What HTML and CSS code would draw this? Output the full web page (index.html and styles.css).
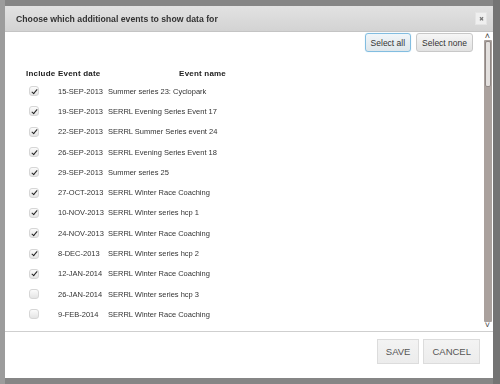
FILE: index.html
```html
<!DOCTYPE html>
<html>
<head>
    <title>Choose events</title>
    <link rel="stylesheet" href="styles.css">
</head>
<body>
    <div class="backdrop">
        <div class="dialog">
            <div class="dialog-header">
                <span class="dialog-title">Choose which additional events to show data for</span>
                <span class="close-btn">&#x2716;</span>
            </div>

            <div class="dialog-body">
                <div class="scroll-area">
                    <div class="select-buttons">
                        <button class="btn-small focused">Select all</button>
                        <button class="btn-small">Select none</button>
                    </div>

                    <table class="events">
                        <thead>
                            <tr>
                                <th class="col-include">Include</th>
                                <th class="col-date">Event date</th>
                                <th class="col-name">Event name</th>
                            </tr>
                        </thead>
                        <tbody>
                            <tr><td><span class="check on"></span></td><td>15-SEP-2013</td><td>Summer series 23: Cyclopark</td></tr>
                            <tr><td><span class="check on"></span></td><td>19-SEP-2013</td><td>SERRL Evening Series Event 17</td></tr>
                            <tr><td><span class="check on"></span></td><td>22-SEP-2013</td><td>SERRL Summer Series event 24</td></tr>
                            <tr><td><span class="check on"></span></td><td>26-SEP-2013</td><td>SERRL Evening Series Event 18</td></tr>
                            <tr><td><span class="check on"></span></td><td>29-SEP-2013</td><td>Summer series 25</td></tr>
                            <tr><td><span class="check on"></span></td><td>27-OCT-2013</td><td>SERRL Winter Race Coaching</td></tr>
                            <tr><td><span class="check on"></span></td><td>10-NOV-2013</td><td>SERRL Winter series hcp 1</td></tr>
                            <tr><td><span class="check on"></span></td><td>24-NOV-2013</td><td>SERRL Winter Race Coaching</td></tr>
                            <tr><td><span class="check on"></span></td><td>8-DEC-2013</td><td>SERRL Winter series hcp 2</td></tr>
                            <tr><td><span class="check on"></span></td><td>12-JAN-2014</td><td>SERRL Winter Race Coaching</td></tr>
                            <tr><td><span class="check"></span></td><td>26-JAN-2014</td><td>SERRL Winter series hcp 3</td></tr>
                            <tr><td><span class="check"></span></td><td>9-FEB-2014</td><td>SERRL Winter Race Coaching</td></tr>
                        </tbody>
                    </table>
                </div>

                <div class="scrollbar">
                    <span class="arrow">&#x2c4;</span>
                    <div class="track">
                        <div class="thumb"></div>
                    </div>
                    <span class="arrow">&#x2c5;</span>
                </div>
            </div>

            <div class="dialog-footer">
                <button class="btn-footer">SAVE</button>
                <button class="btn-footer">CANCEL</button>
            </div>
        </div>
    </div>
</body>
</html>
```

FILE: styles.css
```css
body {
    margin: 0;
    font-family: "Liberation Sans", Arial, sans-serif;
    background: #8a8a8a;
    -webkit-font-smoothing: antialiased;
}
.backdrop {
    width: 500px;
    height: 384px;
    padding: 6px 7px 6px 5px;
    box-sizing: border-box;
    background: linear-gradient(to right, #9c9c9c 0, #9c9c9c 5px, #868686 5px, #868686 493px, #747474 493px);
}
.dialog {
    background: white;
    height: 372px;
    display: flex;
    flex-direction: column;
}
.dialog-header {
    height: 26px;
    box-sizing: border-box;
    background: linear-gradient(#e2e2e2, #d3d3d3);
    border-bottom: 1px solid #c4c4c4;
    display: flex;
    align-items: center;
    justify-content: space-between;
    padding: 0 6px 0 11px;
    filter: grayscale(1);
}
.dialog-title {
    font-size: 8.7px;
    font-weight: bold;
    color: #333;
}
.close-btn {
    width: 10px;
    height: 11px;
    background: #efefef;
    border: 1px solid #e4e4e4;
    color: #777;
    font-size: 6px;
    display: flex;
    align-items: center;
    justify-content: center;
}
.dialog-body {
    flex: 1;
    display: flex;
    min-height: 0;
    border-bottom: 1px solid #cfcfcf;
}
.scroll-area {
    flex: 1;
    overflow: hidden;
}
.select-buttons {
    display: flex;
    justify-content: flex-end;
    gap: 5px;
    padding: 1px 10px 0 0;
}
.btn-small {
    font-family: "Liberation Sans", Arial, sans-serif;
    font-size: 8.5px;
    color: #333;
    height: 19px;
    padding: 0 5px;
    border: 1px solid #c8c8c8;
    border-radius: 3px;
    background: linear-gradient(#f6f6f6, #e2e2e2);
}
.btn-small.focused {
    border-color: #82bde0;
    box-shadow: 0 0 1px #9fd0ee;
    background: linear-gradient(#f0f6fa, #dfe6ea);
}
.events {
    border-collapse: collapse;
    table-layout: fixed;
    width: 204px;
    margin: 13px 0 0 19px;
    font-size: 7.5px;
    color: #333;
    filter: grayscale(1);
}
.events th {
    font-size: 8px;
    font-weight: bold;
    color: #222;
    height: 16px;
    padding: 0 2px;
    text-align: left;
    letter-spacing: 0.2px;
    white-space: nowrap;
}
.events th.col-name {
    text-align: right;
}
.events td {
    height: 20.3px;
    padding: 0 2px;
    white-space: nowrap;
}
.col-include {
    width: 28px;
}
.col-date {
    width: 46px;
}
.col-name {
    width: 118px;
}
.check {
    display: inline-block;
    width: 10px;
    height: 10px;
    margin-left: 3px;
    border: 1px solid #d6d6d6;
    border-radius: 3px;
    background: linear-gradient(#fbfbfb, #e4e4e4);
    vertical-align: middle;
    position: relative;
    box-sizing: border-box;
}
.check.on::after {
    content: "";
    position: absolute;
    left: 2.5px;
    top: 0.5px;
    width: 2px;
    height: 5px;
    border: solid #222;
    border-width: 0 1.5px 1.5px 0;
    transform: rotate(40deg);
}
.scrollbar {
    width: 9px;
    margin: 1px 1px 2px 0;
    display: flex;
    flex-direction: column;
    align-items: center;
}
.arrow {
    font-size: 9px;
    line-height: 7px;
    height: 7px;
    color: #444;
}
.track {
    flex: 1;
    width: 8px;
    background: #aaa19d;
    border-radius: 1px;
    padding: 1px 0;
    box-sizing: border-box;
}
.thumb {
    width: 6px;
    height: 46px;
    margin: 0 auto;
    background: #e3e0de;
    border: 1px solid #8f8784;
    border-radius: 2px;
    box-sizing: border-box;
}
.dialog-footer {
    height: 46px;
    display: flex;
    justify-content: flex-end;
    align-items: flex-start;
    gap: 4px;
    padding: 7px 13px 0 0;
    box-sizing: border-box;
}
.btn-footer {
    font-family: "Liberation Sans", Arial, sans-serif;
    font-size: 9.5px;
    color: #555;
    height: 25px;
    padding: 0 8px;
    border: 1px solid #dcdcdc;
    background: linear-gradient(#f3f3f3, #ececec);
}
```
